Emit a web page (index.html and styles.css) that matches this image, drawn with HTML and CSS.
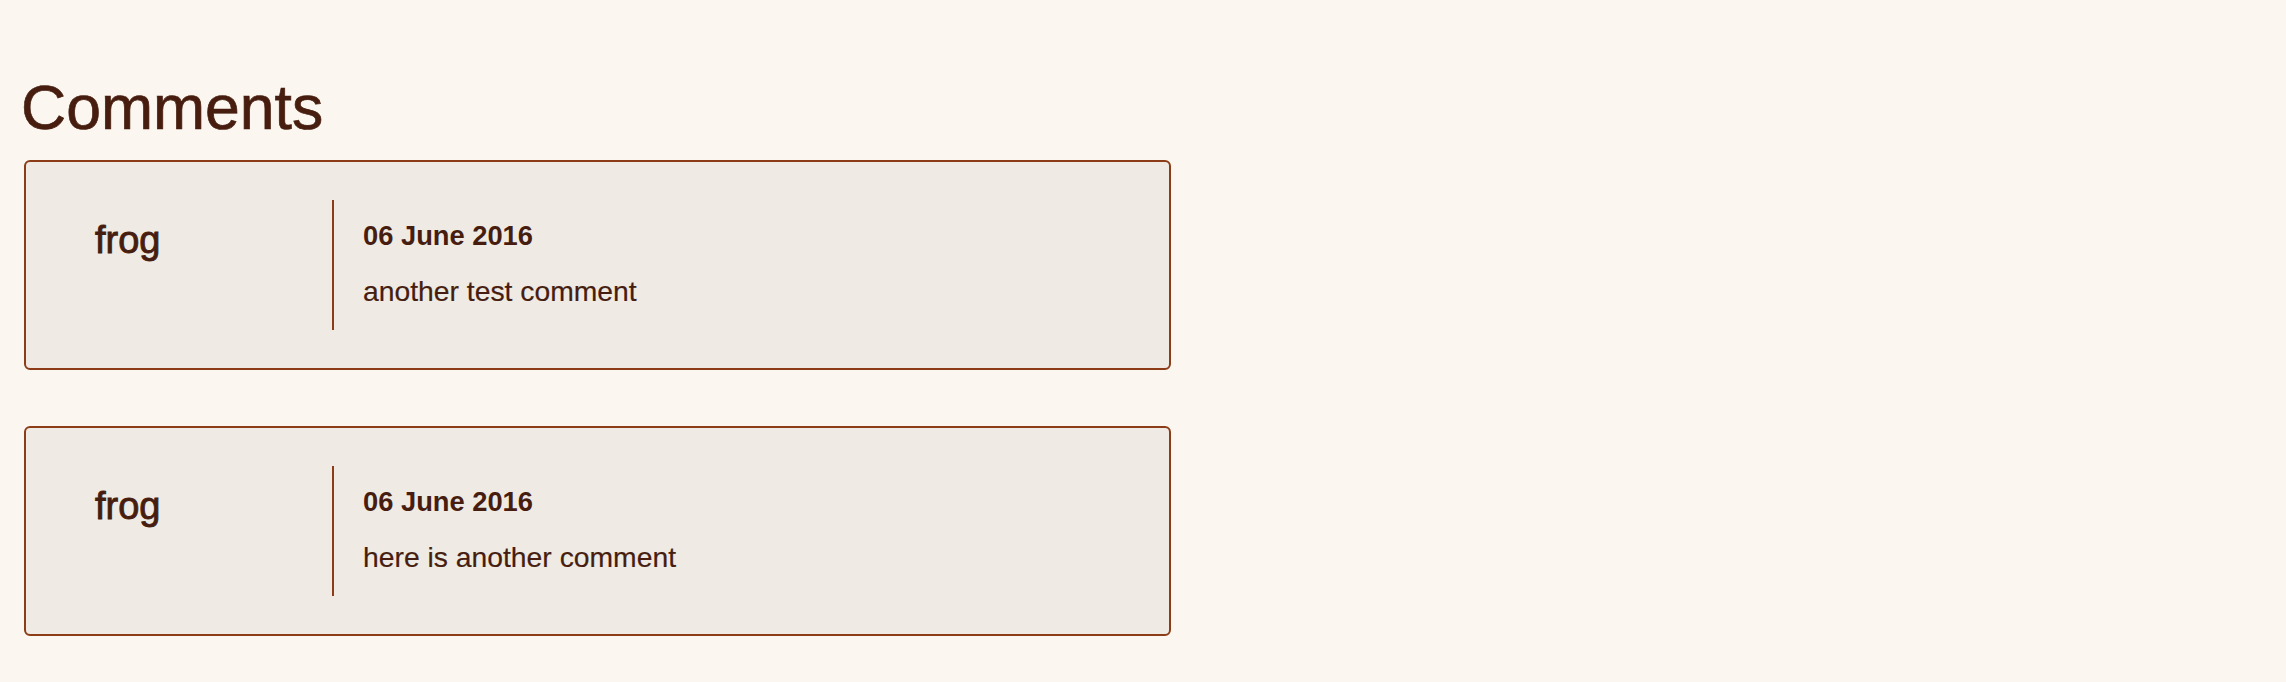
FILE: index.html
```html
<!DOCTYPE html>
<html lang="en">
<head>
<meta charset="utf-8">
<title>Comments</title>
<link rel="stylesheet" href="styles.css">
</head>
<body>
<main class="page">
  <h1 class="title">Comments</h1>
  <section class="comments">
    <article class="comment">
      <div class="comment-author">frog</div>
      <div class="comment-body">
        <div class="comment-date">06 June 2016</div>
        <div class="comment-text">another test comment</div>
      </div>
    </article>
    <article class="comment">
      <div class="comment-author">frog</div>
      <div class="comment-body">
        <div class="comment-date">06 June 2016</div>
        <div class="comment-text">here is another comment</div>
      </div>
    </article>
  </section>
</main>
</body>
</html>
```

FILE: styles.css
```css
html, body {
  margin: 0;
  padding: 0;
  background: #fbf7f0;
}

body {
  font-family: "Liberation Sans", Arial, Helvetica, sans-serif;
  color: #461d0f;
}

.page {
  padding: 71px 24px 40px 24px;
}

.title {
  margin: 0 0 17px -3px;
  font-size: 62.5px;
  line-height: 72px;
  font-weight: 400;
  -webkit-text-stroke: 0.7px #461d0f;
}

.comments {
  display: flex;
  flex-direction: column;
  gap: 56px;
  width: 1147px;
}

.comment {
  box-sizing: border-box;
  display: flex;
  align-items: stretch;
  height: 210px;
  padding: 38px 0 38px 0;
  background: #efebe4;
  border: 2px solid #8c3c17;
  border-radius: 6px;
}

.comment-author {
  box-sizing: border-box;
  width: 306px;
  flex: none;
  padding: 19px 0 0 69px;
  font-size: 38px;
  line-height: 42px;
  -webkit-text-stroke: 0.9px #461d0f;
}

.comment-body {
  display: flex;
  flex-direction: column;
  gap: 23px;
  padding: 20px 0 23px 29px;
  border-left: 2px solid #8c3c17;
}

.comment-date {
  font-size: 27.3px;
  line-height: 32px;
  font-weight: 700;
}

.comment-text {
  font-size: 28.3px;
  line-height: 32px;
  -webkit-text-stroke: 0.2px #461d0f;
}
```
